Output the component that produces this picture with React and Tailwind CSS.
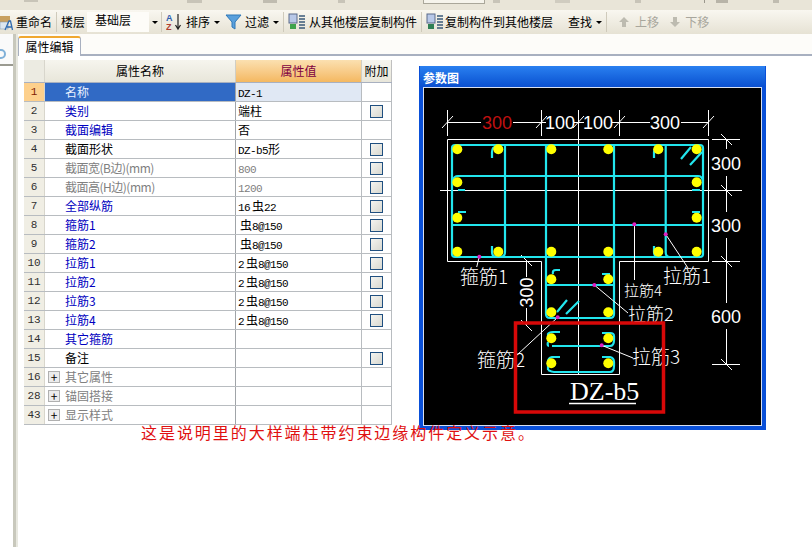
const CJK = '"Noto Sans CJK SC", sans-serif'

const rows = [
  { n: 1, name: '名称', value: 'DZ-1', kind: 'selected' },
  { n: 2, name: '类别', value: '端柱', kind: 'link', check: true },
  { n: 3, name: '截面编辑', value: '否', kind: 'link' },
  { n: 4, name: '截面形状', value: 'DZ-b5形', check: true },
  { n: 5, name: '截面宽(B边)(mm)', value: '800', kind: 'muted', check: true },
  { n: 6, name: '截面高(H边)(mm)', value: '1200', kind: 'muted', check: true },
  { n: 7, name: '全部纵筋', value: '16虫22', kind: 'link', check: true },
  { n: 8, name: '箍筋1', value: '虫8@150', kind: 'link', check: true },
  { n: 9, name: '箍筋2', value: '虫8@150', kind: 'link', check: true },
  { n: 10, name: '拉筋1', value: '2虫8@150', kind: 'link', check: true },
  { n: 11, name: '拉筋2', value: '2虫8@150', kind: 'link', check: true },
  { n: 12, name: '拉筋3', value: '2虫8@150', kind: 'link', check: true },
  { n: 13, name: '拉筋4', value: '2虫8@150', kind: 'link', check: true },
  { n: 14, name: '其它箍筋', value: '', kind: 'link' },
  { n: 15, name: '备注', value: '', check: true },
  { n: 16, name: '其它属性', value: '', kind: 'group' },
  { n: 28, name: '锚固搭接', value: '', kind: 'group' },
  { n: 43, name: '显示样式', value: '', kind: 'group' },
]

function Caret() {
  return <span className="ml-1 inline-block border-x-[3px] border-t-[3px] border-x-transparent border-t-black" />
}

function Sep() {
  return <span className="mx-1 h-[20px] w-px bg-[#cfcabb]" />
}

function StackIcon({ arrow }) {
  return (
    <svg width="18" height="18" viewBox="0 0 18 18" className="shrink-0">
      <rect x="1" y="1" width="8" height="9" fill="#b8c8e8" stroke="#5a6a8a" />
      <rect x="2" y="11" width="6" height="5" fill={arrow} />
      <path d="M11 3h6M11 6h6M11 9h6M11 12h6M11 15h6" stroke="#3a5a7a" strokeWidth="1.6" />
    </svg>
  )
}

function TopStrip() {
  return (
    <div className="h-[10px] shrink-0 flex items-start bg-[#e9e5d8]">
      <span className="ml-[24px] w-[14px] h-[2px] bg-[#c8c4b8]" />
      <span className="ml-[149px] w-[15px] h-[3px] bg-[#c8c4b8]" />
      <span className="ml-[61px] w-[14px] h-[3px] bg-[#c0bcb0]" />
      <span className="ml-[61px] w-[7px] h-[3px] bg-[#c8c4b8]" />
      <span className="ml-[78px] w-[62px] h-[4px] bg-[#f6f4ec] border-x border-b border-[#aaa79a]" />
      <span className="ml-[8px] w-[7px] h-[3px] bg-[#c8c4b8]" />
      <span className="ml-[55px] w-[15px] h-[3px] bg-[#d0ccc0]" />
      <span className="ml-[65px] w-[6px] h-[3px] bg-[#c8c4b8]" />
      <span className="ml-[63px] w-[1px] h-[3px] bg-[#9a978c]" />
      <span className="ml-[11px] w-[12px] h-[3px] bg-[#b8b4a8]" />
      <span className="ml-[45px] w-[6px] h-[3px] bg-[#c0bcb0]" />
    </div>
  )
}

function Toolbar() {
  return (
    <div className="h-[24px] shrink-0 flex items-center pl-[1px] text-[12px] text-black bg-gradient-to-b from-[#f9f7f0] to-[#e6e2d4]">
      <svg width="14" height="18" viewBox="0 0 14 18" className="shrink-0 -ml-[1px]">
        <rect x="0" y="3" width="10" height="6" fill="#c8a060" />
        <rect x="0" y="9" width="8" height="7" fill="#dce6ef" stroke="#7a90a8" strokeWidth="0.5" />
        <path d="M5 17l4-9h1.500l2 9M7 14h5" stroke="#2f6ab0" strokeWidth="1.300" fill="none" />
      </svg>
      <span className="ml-[2px]">重命名</span>
      <Sep />
      <span>楼层</span>
      <span className="ml-[2px] w-[62px] h-[20px] bg-[#fdfcf8] pl-[8px] leading-[16px]">基础层</span>
      <span className="w-[8px] flex justify-center"><Caret /></span>
      <Sep />
      <svg width="18" height="20" viewBox="0 0 18 20" className="shrink-0">
        <text x="0" y="9" fontSize="9" fontFamily="Liberation Sans" fontWeight="700" fill="#2f5fb0">A</text>
        <text x="0" y="18" fontSize="9" fontFamily="Liberation Sans" fontWeight="700" fill="#b04030">Z</text>
        <path d="M12 2v14M9.500 13l2.500 4 2.500-4" stroke="#222" fill="none" strokeWidth="1.200" />
      </svg>
      <span className="ml-[2px]">排序</span>
      <Caret />
      <svg width="18" height="16" viewBox="0 0 18 16" className="ml-[5px] shrink-0">
        <path d="M1 1h15l-6 7v7l-3-2V8z" fill="#5aa0dc" stroke="#2f78b8" />
      </svg>
      <span className="ml-[2px]">过滤</span>
      <Caret />
      <Sep />
      <StackIcon arrow="#3fa34d" />
      <span className="ml-[3px]">从其他楼层复制构件</span>
      <Sep />
      <StackIcon arrow="#2f7f55" />
      <span className="ml-[1px]">复制构件到其他楼层</span>
      <span className="ml-[3px]"><Sep /></span>
      <span className="ml-[4px]">查找</span>
      <Caret />
      <Sep />
      <svg width="12" height="12" viewBox="0 0 12 12" className="ml-[7px] shrink-0">
        <path d="M6 1l5 5H8v5H4V6H1z" fill="#bdbbb0" />
      </svg>
      <span className="ml-[5px] text-[#a8a69c]">上移</span>
      <svg width="12" height="12" viewBox="0 0 12 12" className="ml-[10px] shrink-0">
        <path d="M6 11l5-5H8V1H4v5H1z" fill="#bdbbb0" />
      </svg>
      <span className="ml-[4px] text-[#a8a69c]">下移</span>
    </div>
  )
}

// latin part of a value cell is half-width, cjk part stays full size
function Value({ text }) {
  return text.split(/([A-Za-z0-9@-]+)/).filter(Boolean).map((part, i) => {
    if (/^[A-Za-z0-9@-]+$/.test(part)) {
      return <span key={i} className="text-[11px] tracking-[-0.6px] font-['Liberation_Mono']">{part}</span>
    }
    if (part === '虫') return <span key={i} className="ml-[2px]">虫</span>
    return <span key={i}>{part}</span>
  })
}

function Row({ row }) {
  const selected = row.kind === 'selected'
  const nameColor =
    row.kind === 'link' ? 'text-[#0000c0]' :
    row.kind === 'muted' || row.kind === 'group' ? 'text-[#808080]' :
    selected ? 'text-[#e8f0ff]' : 'text-black'
  return (
    <div className="flex h-[19px] border-b border-[#b8bcc0] text-[12px] leading-[18px]">
      <div className={`w-[21px] shrink-0 text-center text-[11px] font-['Liberation_Mono'] border-r border-[#d8d6cc] ${selected ? 'bg-[#fdd08c] text-[#802000]' : 'bg-[#f0eee4] text-[#303030]'}`}>
        {row.n}
      </div>
      <div className={`w-[191px] shrink-0 flex items-center pl-[20px] border-r border-[#a0a4a8] ${selected ? 'bg-[#316ac5]' : ''} ${row.kind === 'muted' ? 'tracking-[-0.5px]' : ''} ${nameColor}`}>
        {row.kind === 'group' && (
          <span className="-ml-[17px] mr-[5px] w-[12px] h-[12px] border border-[#b0b0b0] bg-[#ececec] flex items-center justify-center text-[12px] leading-none text-black">+</span>
        )}
        {row.name}
      </div>
      <div className={`w-[126px] shrink-0 pl-[2px] border-r border-[#b8bcc0] whitespace-pre ${selected ? 'bg-[#e0e8f4]' : ''} ${row.kind === 'muted' ? 'text-[#808080]' : 'text-black'}`}>
        <Value text={row.value} />
      </div>
      <div className="w-[30px] shrink-0 flex items-center justify-center border-r border-[#b8bcc0]">
        {row.check && <span className="w-[13px] h-[13px] border border-[#1f4f80] bg-gradient-to-br from-[#f4f4f0] to-[#d8d8d0]" />}
      </div>
    </div>
  )
}

function Table() {
  return (
    <div className="w-[368px] text-[12px]">
      <div className="flex h-[23px] border-b border-[#a8b0c0] leading-[22px]">
        <div className="w-[21px] shrink-0 bg-[#ecebe2] border-r border-[#d8d6cc]" />
        <div className="w-[191px] shrink-0 text-center bg-gradient-to-b from-[#f6f5ee] to-[#e8e6da] border-r border-[#d0cec4]">属性名称</div>
        <div className="w-[126px] shrink-0 text-center text-[#800040] bg-gradient-to-b from-[#fbe0b0] to-[#f4b860] border-r border-[#d0cec4]">属性值</div>
        <div className="w-[30px] shrink-0 text-center bg-gradient-to-b from-[#f6f5ee] to-[#e8e6da] border-r border-[#c0c0c0]">附加</div>
      </div>
      {rows.map((row) => <Row key={row.n} row={row} />)}
    </div>
  )
}

function Drawing() {
  const bars = [
    [457.3, 149.3], [498.3, 149.3], [551.3, 149.3], [608.3, 149.3], [658.3, 149.3], [696.7, 149.3],
    [457.3, 182.3], [696.7, 182.3], [457.3, 217.7], [696.7, 217.7],
    [457.3, 251.7], [498.3, 251.7], [551.3, 251.7], [608.3, 251.7], [658.3, 251.7], [696.7, 251.7],
    [551.3, 279.3], [608.3, 279.3], [551.3, 312.3], [608.3, 312.3],
    [551.3, 338.3], [608.3, 338.3], [551.3, 363.3], [608.3, 363.3],
  ]
  const pins = [[634.3, 224.3], [665.7, 234.3], [479.3, 256.7], [594.3, 285], [557.7, 317.3], [601.7, 345.3]]
  const label = { fill: '#fff', fontFamily: CJK, fontWeight: 300 }
  const dim = { fill: '#fff', fontFamily: '"Liberation Sans", sans-serif', fontSize: 18 }

  return (
    <svg viewBox="424 88 337 337" className="w-full h-full block">
      {/* outline */}
      <path d="M447.500 139.500H708.500V261.500H619.500V374.500H541.500V261.500H447.500Z" fill="none" stroke="#fff" />
      <path d="M578.500 110V374M440 190.500H742" stroke="#fff" />

      {/* dimensions */}
      <path d="M447.500 110V136M541.500 110V136M619.500 110V136M708.500 110V136M447 122.500H481M513 122.500H546M574 122.500H584M612 122.500H650M681 122.500H708" stroke="#fff" />
      <path d="M442 128l11-12M536 128l11-12M573 128l11-12M614 128l11-12M703 128l11-12" stroke="#fff" />
      <path d="M712 139.500H740M712 190.500H740M712 261.500H740M712 364.500H740M726.500 139V149M726.500 176V212M726.500 238V303M726.500 329V364" stroke="#fff" />
      <path d="M721 134l11 11M721 185l11 11M721 256l11 11M721 359l11 11" stroke="#fff" />
      <path d="M526.500 260V277M526.500 308V325M521 255l11 11M521 320l11 11" stroke="#fff" />
      <text x="497" y="129" textAnchor="middle" {...dim} fill="#c01010">300</text>
      <text x="560" y="129" textAnchor="middle" {...dim}>100</text>
      <text x="598" y="129" textAnchor="middle" {...dim}>100</text>
      <text x="665" y="129" textAnchor="middle" {...dim}>300</text>
      <text x="726" y="170" textAnchor="middle" {...dim}>300</text>
      <text x="726" y="232" textAnchor="middle" {...dim}>300</text>
      <text x="726" y="323" textAnchor="middle" {...dim}>600</text>
      <text x="533" y="292.500" textAnchor="middle" transform="rotate(-90 533 292.500)" {...dim}>300</text>

      {/* rebar */}
      <g stroke="#22e6ee" strokeWidth="2.200" fill="none">
        <rect x="452" y="145" width="251" height="112" rx="3" />
        <path d="M505 146V252q0 5-5 5M546 145V314q0 4 4 4H610q4 0 4-4V145M665.700 146V252q0 5 4 5" />
        <path d="M458 176H698q4 0 5 5M458 176q-4 0-5 4M453 225H703" />
        <path d="M546 285H614M552 346H610q4 0 4-6v-4q0-3-4-3H602" />
        <path d="M492 158v-6q0-5 5-6M654 158v-6q0-5 5-6M492 246v6q0 5 5 5M654 246v6q0 5 5 5" />
        <path d="M681 159l10-12M690 165l12-13" />
        <path d="M458 190H465M692 190H700M458 212H466M692 212H700" />
        <path d="M553 274q-1-4 3-4H560M610 274H602M557 312l10-12M566 314l13-13" />
        <path d="M548 336v-2q1-2 5-2h7M549 346q-2 0-1-4M548 370q4 2 6 2H610q4 0 4-6v-4q0-4-4-5H602M548 370v-8q0-4 4-5h8" />
      </g>
      {bars.map(([cx, cy]) => <circle key={`${cx}-${cy}`} cx={cx} cy={cy} r="5" fill="#ffff00" />)}

      {/* leaders */}
      <path d="M634.500 224V280M665.700 234.300L688 268M479.300 256.700L476.700 267M594.300 285L628 313M557.700 317.300L517 355M601.700 345.300L633 358" stroke="#fff" />
      {pins.map(([cx, cy]) => <circle key={`${cx}-${cy}`} cx={cx} cy={cy} r="2" fill="#e020c0" />)}

      <text x="460" y="284" fontSize="19" {...label}>箍筋1</text>
      <text x="663" y="283" fontSize="19" {...label}>拉筋1</text>
      <text x="624" y="296" fontSize="15" {...label}>拉筋4</text>
      <text x="628" y="321" fontSize="18" {...label}>拉筋2</text>
      <text x="477" y="367" fontSize="19" {...label}>箍筋2</text>
      <text x="632" y="364" fontSize="19" {...label}>拉筋3</text>
      <text x="570" y="400" fontSize="26" fill="#fff" fontFamily='"Liberation Serif", serif'>DZ-b5</text>
      <path d="M569 403.500H636" stroke="#fff" strokeWidth="1.500" />

      <rect x="515.500" y="323" width="148" height="89" fill="none" stroke="#d80808" strokeWidth="3.500" />
    </svg>
  )
}

function ParamWindow() {
  return (
    <div className="w-[347px] h-[364px] flex flex-col bg-[#0a50d8] border-x-[4px] border-b-[4px] border-[#0a50d8]">
      <div className="h-[21px] shrink-0 -mx-[3px] pl-[3px] bg-gradient-to-b from-[#2a80f0] to-[#0a4fd0] text-white text-[12px] font-bold leading-[24px]">
        参数图
      </div>
      <div className="flex-1 min-h-0 border border-[#d8e0f0] bg-black">
        <Drawing />
      </div>
    </div>
  )
}

export default function App() {
  return (
    <div className="w-[812px] h-[547px] overflow-hidden bg-white flex flex-col" style={{ fontFamily: CJK }}>
      <TopStrip />
      <Toolbar />
      <div className="flex-1 flex min-h-0">
        <div className="w-[13px] shrink-0 flex flex-col">
          <div className="h-[30px] bg-[#fafafa] flex items-end pb-[5px]">
            <span className="-ml-[4px] w-[10px] h-[10px] rounded-full border-2 border-[#7fb0d8]" />
          </div>
          <div className="h-[2px] bg-[#9a9a90]" />
        </div>
        <div className="w-[5px] shrink-0 bg-[#c8c8bc] border-r-2 border-[#e8e8e0]" />
        <div className="flex-1 min-w-0 relative">
          <div className="h-[22px] flex items-end border-b-2 border-[#a8b0c0] bg-[#fdfcf9]">
            <div className="w-[63px] h-[20px] -mb-[2px] bg-white border-x border-[#a8b0c0] border-t-2 border-t-[#f0a830] rounded-t-[3px] text-center text-[12px] leading-[18px]">
              属性编辑
            </div>
          </div>
          <div className="flex mt-[4px] ml-[6px] items-start">
            <Table />
            <div className="ml-[27px] mt-[6px]">
              <ParamWindow />
            </div>
          </div>
          <p className="absolute left-[123px] top-[387px] text-[16px] leading-[22px] tracking-[1.950px] text-[#e01010] whitespace-nowrap">
            这是说明里的大样端柱带约束边缘构件定义示意。
          </p>
        </div>
      </div>
    </div>
  )
}
